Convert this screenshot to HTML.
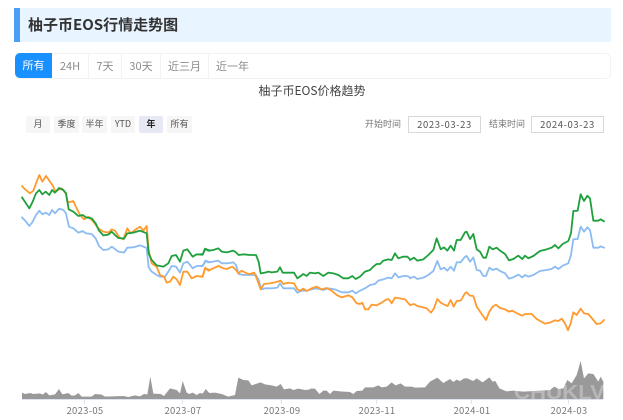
<!DOCTYPE html>
<html lang="zh">
<head>
<meta charset="utf-8">
<title>柚子币EOS行情走势图</title>
<style>
html,body{margin:0;padding:0;background:#fff;width:623px;height:420px;overflow:hidden}
body{position:relative;font-family:"Noto Sans CJK SC","Liberation Sans",sans-serif;color:#333;filter:blur(.3px)}
.a{position:absolute;white-space:nowrap;box-sizing:border-box}
.hd{left:14px;top:8px;width:597px;height:34px;background:#e8f4ff;border-left:6px solid #4a9ff5}
.ttl{left:28px;top:13px;font-size:15px;line-height:24px;font-weight:700;color:#333}
.tabs{left:15px;top:53px;width:596px;height:26px;border:1px solid #f2f2f2;border-radius:5px}
.act{left:15px;top:53px;width:37px;height:25px;background:#1890ff;border-radius:5px 0 0 5px;color:#fff;font-size:11px;line-height:25px;text-align:center}
.tb{top:54px;height:24px;line-height:24px;font-size:11px;color:#8c8c8c;text-align:center;border-right:1px solid #f2f2f2}
.ct{left:212px;width:200px;top:82px;text-align:center;font-size:12px;line-height:18px;color:#444}
.b{top:116px;height:17px;line-height:16px;background:#f6f6f6;font-size:9px;color:#555;text-align:center;border-radius:2px}
.b.on{background:#e6e9f4;color:#222;font-weight:700}
.l{top:116px;font-size:9px;line-height:16px;color:#777}
.d{top:116px;height:17px;width:73px;border:1px solid #d8d8d8;font-size:9.5px;line-height:15px;text-align:center;color:#555;letter-spacing:.6px}
.x{top:404px;font-size:9.5px;line-height:13px;color:#777;width:60px;text-align:center;letter-spacing:.3px}
svg{position:absolute;left:0;top:0}
.wm{font-family:"Liberation Sans",sans-serif;font-weight:700;font-size:20px;fill:#fff;fill-opacity:.3}
</style>
</head>
<body>
<div class="a hd"></div>
<div class="a ttl">柚子币EOS行情走势图</div>
<div class="a tabs"></div>
<div class="a act">所有</div>
<div class="a tb" style="left:52px;width:37px">24H</div>
<div class="a tb" style="left:89px;width:33px">7天</div>
<div class="a tb" style="left:122px;width:39px">30天</div>
<div class="a tb" style="left:161px;width:48px">近三月</div>
<div class="a tb" style="left:209px;width:47px;border-right:0">近一年</div>
<div class="a ct">柚子币EOS价格趋势</div>
<div class="a b" style="left:26px;width:24px">月</div>
<div class="a b" style="left:54px;width:25px">季度</div>
<div class="a b" style="left:82px;width:25px">半年</div>
<div class="a b" style="left:111px;width:24px">YTD</div>
<div class="a b on" style="left:139px;width:24px">年</div>
<div class="a b" style="left:167px;width:25px">所有</div>
<div class="a l" style="left:365px">开始时间</div>
<div class="a d" style="left:408px">2023-03-23</div>
<div class="a l" style="left:489px">结束时间</div>
<div class="a d" style="left:531px">2024-03-23</div>

<svg width="623" height="420" viewBox="0 0 623 420">
<g fill="#999">
<polygon transform="translate(0,350) scale(.33333)" points="66,147 66,128 75,132 90,129 100,132 120,130 128,134 138,126 148,136 165,133 177,117 187,133 205,129 215,137 225,136 235,129 245,140 275,140 285,132 305,134 315,140 370,138 385,141 405,136 420,139 432,132 442,133 451,80 460,131 482,132 492,138 510,115 530,120 540,130 548,93 560,128 568,132 578,128 590,135 600,129 608,131 617,117 628,129 645,128 665,132 685,140 705,135 715,83 730,90 745,91 755,106 782,97 795,103 815,106 830,110 842,102 852,118 870,115 880,120 895,116 915,120 931,118 931,147"/>
<polygon transform="translate(310,350) scale(.33333)" points="0,147 0,116 15,116 28,132 40,122 50,122 60,132 70,122 90,124 120,126 130,132 140,123 157,122 165,112 190,112 205,106 215,112 230,110 245,97 257,106 272,100 285,110 305,110 315,113 345,112 360,95 382,83 400,99 420,87 430,96 440,89 450,93 462,85 472,85 490,93 500,85 518,97 538,82 548,95 556,93 568,115 590,124 610,122 640,125 690,122 720,120 733,110 745,117 760,115 772,90 785,100 800,75 812,33 822,85 835,70 850,72 865,95 872,80 880,95 880,147"/>
</g>
<text class="wm" x="514" y="399" textLength="91" lengthAdjust="spacingAndGlyphs">CHUKLV</text>
<path d="M22 399.5H603M84.5 399v5M182.5 399v5M281.5 399v5M376.5 399v5M471.5 399v5M568.5 399v5" stroke="#dde3f2" stroke-width="1" fill="none"/>

<g fill="none" stroke-linejoin="round" stroke-linecap="round" stroke-width="1.8">
<g transform="translate(0,160) scale(.33333)">
<polyline vector-effect="non-scaling-stroke" stroke="#8cbcf2" points="66,172 78,185 88,198 98,185 108,165 118,152 127,163 137,158 148,165 156,150 165,160 177,146 190,150 198,160 207,200 220,205 235,218 248,213 258,220 275,222 287,235 297,258 310,270 325,268 335,260 345,267 355,275 372,278 382,263 400,262 420,256 440,264 446,322 455,335 470,345 480,350 495,350 505,335 515,318 528,320 540,338 550,310 562,305 578,325 590,318 608,318 618,302 630,307"/>
<polyline vector-effect="non-scaling-stroke" stroke="#ff9a2e" points="66,78 75,88 90,100 100,92 110,65 118,45 127,65 138,48 150,65 160,80 166,95 175,90 185,85 197,100 204,128 220,123 230,145 240,165 252,178 265,170 280,185 295,205 310,215 325,218 335,208 345,212 358,232 370,238 382,205 392,220 405,210 420,200 430,212 440,198 446,270 455,310 470,320 480,345 492,350 500,368 510,365 520,350 530,358 540,375 550,335 562,335 575,355 590,348 608,350 615,325 630,330"/>
<polyline vector-effect="non-scaling-stroke" stroke="#1ea03c" points="66,112 78,130 88,145 98,125 108,100 118,90 127,103 137,95 148,105 156,90 165,98 177,84 190,90 198,100 206,148 220,155 235,168 248,165 258,172 275,175 287,190 297,212 310,226 325,224 335,215 345,225 355,234 372,236 382,220 400,218 420,212 440,220 446,280 455,300 470,316 490,320 505,310 515,288 528,285 540,305 550,272 562,268 578,290 590,283 608,284 615,266 630,272"/>
</g>
<g transform="translate(200,220) scale(.33333)">
<polyline vector-effect="non-scaling-stroke" stroke="#8cbcf2" points="0,138 8,138 16,122 25,127 40,125 55,122 65,130 80,130 100,127 108,135 116,162 130,165 150,165 168,165 176,180 184,208 195,205 215,205 232,203 240,190 250,205 265,205 282,205 292,218 305,212 320,212 335,208 350,205 370,210 385,205 405,208 425,217 445,217 457,212 467,220 480,212 495,205 510,195 525,192 535,182 550,178 565,173 575,175 585,160 595,172 610,168 622,168 630,172"/>
<polyline vector-effect="non-scaling-stroke" stroke="#ff9a2e" points="0,170 8,170 16,143 25,152 40,145 55,138 70,145 80,147 97,140 108,150 115,160 125,152 140,160 150,162 163,158 172,180 182,208 192,192 210,190 225,187 242,182 250,192 265,188 282,190 292,208 300,212 310,206 320,213 335,205 350,200 365,208 380,204 395,212 410,225 425,232 445,226 457,232 470,250 480,252 487,248 495,268 505,268 515,254 530,256 545,248 560,238 567,238 575,250 585,233 600,235 615,238 630,255"/>
<polyline vector-effect="non-scaling-stroke" stroke="#1ea03c" points="0,103 8,103 16,87 25,92 40,90 55,85 65,95 80,97 100,92 108,97 116,105 130,103 150,105 168,105 176,125 182,160 195,158 205,155 215,157 232,155 240,142 248,158 265,158 282,158 292,175 302,168 310,162 320,168 330,158 345,160 355,158 370,168 385,158 400,160 415,165 430,175 445,175 457,168 467,177 480,170 495,155 510,150 520,140 530,132 540,132 550,122 565,118 575,120 585,100 595,115 610,110 622,110 630,118"/>
</g>
<g transform="translate(410,180) scale(.33333)">
<polyline vector-effect="non-scaling-stroke" stroke="#8cbcf2" points="0,295 12,290 22,297 40,293 55,285 70,273 82,243 92,268 102,263 112,272 122,260 132,272 140,247 152,247 165,230 170,228 180,245 190,232 200,270 210,272 220,288 228,288 238,263 248,270 260,266 270,273 285,280 297,296 310,292 325,284 337,292 345,285 355,290 370,285 390,273 410,270 425,267 435,260 445,267 458,257 475,250 483,225 490,178 503,177 512,140 522,155 532,142 540,150 550,203 565,203 572,199 582,203"/>
<polyline vector-effect="non-scaling-stroke" stroke="#ff9a2e" points="0,375 12,372 22,378 40,382 50,385 63,398 72,385 82,357 92,368 105,375 113,378 122,360 131,380 140,363 152,362 165,340 170,337 180,347 190,348 200,380 215,402 228,420 238,395 248,380 258,374 270,384 285,388 297,395 307,392 325,402 337,407 345,402 365,402 380,417 405,431 420,428 435,421 445,423 455,416 465,430 474,451 482,430 490,397 500,405 512,386 522,400 535,402 550,420 560,432 572,430 582,420"/>
<polyline vector-effect="non-scaling-stroke" stroke="#1ea03c" points="0,240 12,233 22,242 40,238 55,225 70,210 80,175 92,208 102,202 112,212 122,197 132,212 140,180 152,180 165,157 170,155 180,177 190,162 200,208 210,215 220,233 228,233 238,200 248,208 260,203 270,212 285,222 297,241 310,237 325,227 337,237 345,227 355,235 370,228 390,213 410,208 425,203 435,195 445,205 458,192 475,183 483,160 490,93 503,92 512,43 522,63 532,47 540,55 550,122 565,122 572,118 582,124"/>
</g>
</g>
</svg>

<div class="a x" style="left:55px">2023-05</div>
<div class="a x" style="left:153px">2023-07</div>
<div class="a x" style="left:252px">2023-09</div>
<div class="a x" style="left:347px">2023-11</div>
<div class="a x" style="left:442px">2024-01</div>
<div class="a x" style="left:539px">2024-03</div>
</body>
</html>
